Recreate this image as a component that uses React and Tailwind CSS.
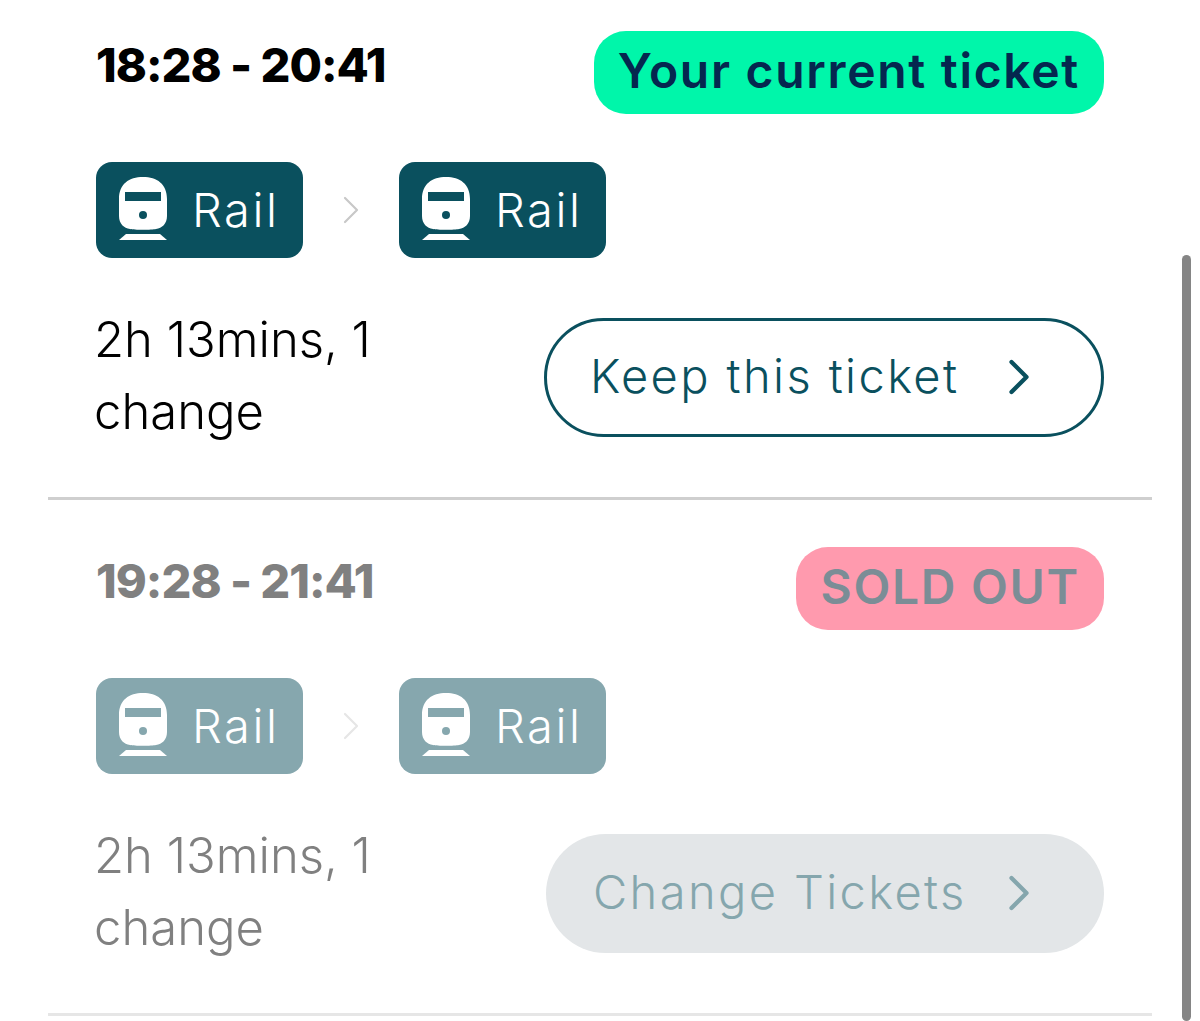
import { ChevronRight } from "lucide-react";

const FONT = "font-['Inter','Liberation_Sans',sans-serif]";

function TrainIcon({ windowClass }) {
  return (
    <svg width="48" height="63" viewBox="0 0 48 63" className="shrink-0 mb-[3px]">
      <path d="M0 22C0 7 10 0 24 0S48 7 48 22V39C48 47 43 51 37 52C33 53 15 53 11 52C5 51 0 47 0 39Z" fill="#fff" />
      <rect x="6" y="15" width="36" height="9" className={windowClass} />
      <circle cx="24" cy="38" r="4" className={windowClass} />
      <path d="M7 57H41L48 63H0Z" fill="#fff" />
    </svg>
  );
}

function RailBadge({ faded }) {
  return (
    <div className={`flex items-center w-[207px] h-[96px] rounded-[16px] pl-[23px] ${faded ? "bg-[#86a7ae]" : "bg-[#0a505e]"}`}>
      <TrainIcon windowClass={faded ? "fill-[#86a7ae]" : "fill-[#0a505e]"} />
      <span className="ml-[25px] pb-[1px] text-[47px] font-light leading-none text-white tracking-[2.6px]">Rail</span>
    </div>
  );
}

function Ticket({ time, label, action, faded, className }) {
  return (
    <section className={`px-[48px] pb-[49px] border-b-[3px] ${faded ? "border-[#e6e6e6]" : "border-[#cfcfcf]"} ${className}`}>
      <div className="flex items-start justify-between">
        <div className={`text-[47px] font-extrabold leading-[68px] tracking-[-1px] ${faded ? "text-[#808080]" : "text-black"}`}>{time}</div>
        <div className={`h-[83px] flex items-center rounded-[32px] px-[24px] pb-[3px] text-[48px] font-semibold leading-none tracking-[1.7px] whitespace-nowrap ${faded ? "bg-[#ff9aae] text-[#7b8d96]" : "bg-[#00f6aa] text-[#05274f]"}`}>
          {label}
        </div>
      </div>

      <div className="flex items-center mt-[48px]">
        <RailBadge faded={faded} />
        <ChevronRight size={48} strokeWidth={1.1} className={`mx-[24px] ${faded ? "text-[#e6e6e6]" : "text-[#c8c8c8]"}`} />
        <RailBadge faded={faded} />
      </div>

      <div className="flex items-center justify-between mt-[46px]">
        <div className={`w-[330px] -ml-[2px] text-[49px] font-light leading-[72px] ${faded ? "text-[#808080]" : "text-black"}`}>
          2h 13mins, 1 change
        </div>
        <div
          className={`flex items-center justify-between mt-[2px] h-[119px] rounded-full pb-[3px] text-[47px] font-light leading-none tracking-[2.4px] whitespace-nowrap ${
            faded ? "w-[558px] pl-[47px] pr-[55px] bg-[#e3e6e8] text-[#85a6ad]" : "w-[560px] pl-[43px] pr-[52px] border-[3px] border-[#0a505e] text-[#0a505e]"
          }`}
        >
          {action}
          <ChevronRight size={60} strokeWidth={1.7} className="mt-[3px]" />
        </div>
      </div>
    </section>
  );
}

export default function App() {
  return (
    <div className={`relative h-[1021px] overflow-hidden bg-white px-[48px] pt-[31px] ${FONT}`}>
      <Ticket time="18:28 - 20:41" label="Your current ticket" action="Keep this ticket" />
      <Ticket time="19:28 - 21:41" label="SOLD OUT" action="Change Tickets" faded className="mt-[47px]" />
      <div className="absolute left-[1182px] top-[255px] bottom-0 w-[9px] rounded-full bg-[#858585]" />
    </div>
  );
}
